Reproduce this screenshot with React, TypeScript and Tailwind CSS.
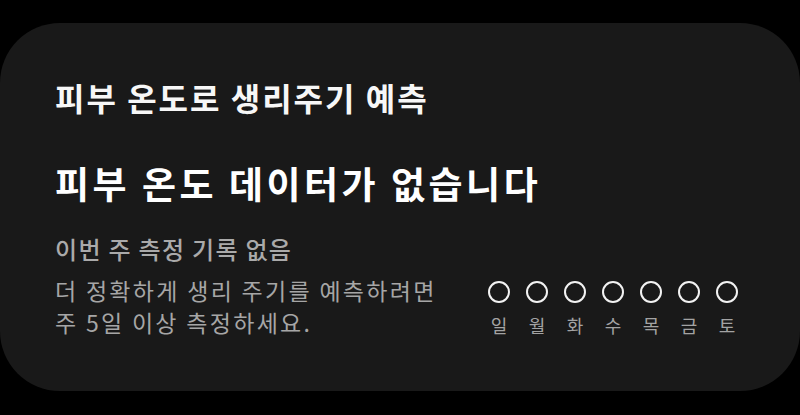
const days = ["일", "월", "화", "수", "목", "금", "토"];

export default function App() {
  return (
    <div
      className="w-[800px] h-[415px] bg-black pt-[23px]"
      style={{ fontFamily: '"Noto Sans CJK KR", "Noto Sans", sans-serif' }}
    >
      <div className="h-[368px] bg-[#191919] rounded-[60px] pl-[55px] pr-[62px] pt-[54px]">
        {/* title */}
        <div className="text-[32px] leading-[40px] font-bold text-[#f7f7f7] tracking-[2px]">
          피부 온도로 생리주기 예측
        </div>

        {/* headline */}
        <div className="mt-[44px] text-[37px] leading-[44px] font-bold text-white tracking-[3.5px]">
          피부 온도 데이터가 없습니다
        </div>

        {/* status */}
        <div className="mt-[28px] text-[24px] leading-[32px] font-medium text-[#aaaaaa] tracking-[1.3px]">
          이번 주 측정 기록 없음
        </div>

        <div className="mt-[9px] flex items-start justify-between">
          <div className="text-[23px] leading-[32px] text-[#a6a6a6] tracking-[2.3px]">
            <div>더 정확하게 생리 주기를 예측하려면</div>
            <div>주 5일 이상 측정하세요.</div>
          </div>

          {/* week dots */}
          <div className="flex gap-[16px] pt-[7px]">
            {days.map((d) => (
              <div key={d} className="flex flex-col items-center w-[22px]">
                <div className="w-[22px] h-[22px] rounded-full border-2 border-[#f2f2f2]" />
                <div className="mt-[12px] text-[18px] leading-[20px] text-[#a3a3a3]">{d}</div>
              </div>
            ))}
          </div>
        </div>
      </div>
    </div>
  );
}
